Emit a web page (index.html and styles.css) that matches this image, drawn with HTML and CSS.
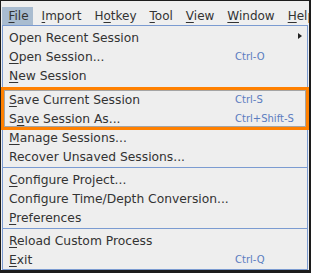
FILE: index.html
```html
<!DOCTYPE html>
<html>
<head>
<meta charset="utf-8">
<link rel="stylesheet" href="styles.css">
</head>
<body>
<div class="frame">
  <div class="menubar">
    <span class="mitem active"><u>F</u>ile</span>
    <span class="mitem"><u>I</u>mport</span>
    <span class="mitem">H<u>o</u>tkey</span>
    <span class="mitem"><u>T</u>ool</span>
    <span class="mitem"><u>V</u>iew</span>
    <span class="mitem"><u>W</u>indow</span>
    <span class="mitem"><u>H</u>elp</span>
  </div>
  <div class="dropdown">
    <div class="item"><span class="label">Open Recent Session</span><span class="arrow"></span></div>
    <div class="item"><span class="label"><u>O</u>pen Session...</span><span class="key">Ctrl-O</span></div>
    <div class="item"><span class="label"><u>N</u>ew Session</span></div>
    <div class="group">
      <div class="item"><span class="label"><u>S</u>ave Current Session</span><span class="key">Ctrl-S</span></div>
      <div class="item"><span class="label">S<u>a</u>ve Session As...</span><span class="key">Ctrl+Shift-S</span></div>
      <div class="highlight"></div>
    </div>
    <div class="item"><span class="label"><u>M</u>anage Sessions...</span></div>
    <div class="item"><span class="label">Recover Unsaved Sessions...</span></div>
    <div class="sep"></div>
    <div class="item"><span class="label"><u>C</u>onfigure Project...</span></div>
    <div class="item"><span class="label">Configure Time/Depth Conversion...</span></div>
    <div class="item"><span class="label"><u>P</u>references</span></div>
    <div class="sep"></div>
    <div class="item"><span class="label"><u>R</u>eload Custom Process</span></div>
    <div class="item"><span class="label"><u>E</u>xit</span><span class="key">Ctrl-Q</span></div>
  </div>
</div>
</body>
</html>
```
FILE: styles.css
```css
html, body {
  margin: 0;
  padding: 0;
  background: #1c1c1c;
}
.frame {
  width: 311px;
  height: 273px;
  box-sizing: border-box;
  border-top: 1px solid #1c1c1c;
  border-left: 1px solid #1c1c1c;
  border-right: 2px solid #1c1c1c;
  border-bottom: 3px solid #1c1c1c;
  background: #eeeeee;
  overflow: hidden;
  font-family: "DejaVu Sans", sans-serif;
  color: #333333;
  display: flex;
  flex-direction: column;
}
.menubar {
  flex: none;
  height: 24px;
  box-sizing: border-box;
  padding-top: 6px;
  padding-left: 1px;
  display: flex;
  background: #efefef;
  font-size: 12px;
  white-space: nowrap;
}
.mitem {
  flex: none;
  height: 18px;
  line-height: 19px;
  padding: 0 6.5px;
}
.mitem.active {
  background: #a9bcd0;
  padding: 0 4px 0 6.5px;
  margin-right: 2.5px;
}
u {
  text-decoration: underline;
  text-underline-offset: 2px;
}
.dropdown {
  flex: none;
  margin-left: 1px;
  width: 306px;
  box-sizing: border-box;
  border: 1px solid #7b9bd1;
  background: #eeeeee;
  padding-top: 2px;
  font-size: 12.3px;
}
.item {
  height: 19px;
  display: grid;
  grid-template-columns: 226px 1fr;
  align-items: center;
  padding-left: 6px;
  white-space: nowrap;
}
.key {
  font-size: 10px;
  color: #5b7cc0;
}
.arrow {
  justify-self: end;
  align-self: start;
  margin: 5px 5px 0 0;
  width: 0;
  height: 0;
  border-top: 3.5px solid transparent;
  border-bottom: 3.5px solid transparent;
  border-left: 4px solid #222;
}
.group {
  position: relative;
  padding-top: 5px;
}
.highlight {
  position: absolute;
  left: -2px;
  right: -2px;
  top: 2px;
  bottom: -2px;
  border: 3px solid #ff8000;
  box-shadow: inset 0 0 0 1px #a4a4a4;
}
.sep {
  height: 1px;
  background: #7b9bd1;
  margin: 1px 0 2px;
}
```
